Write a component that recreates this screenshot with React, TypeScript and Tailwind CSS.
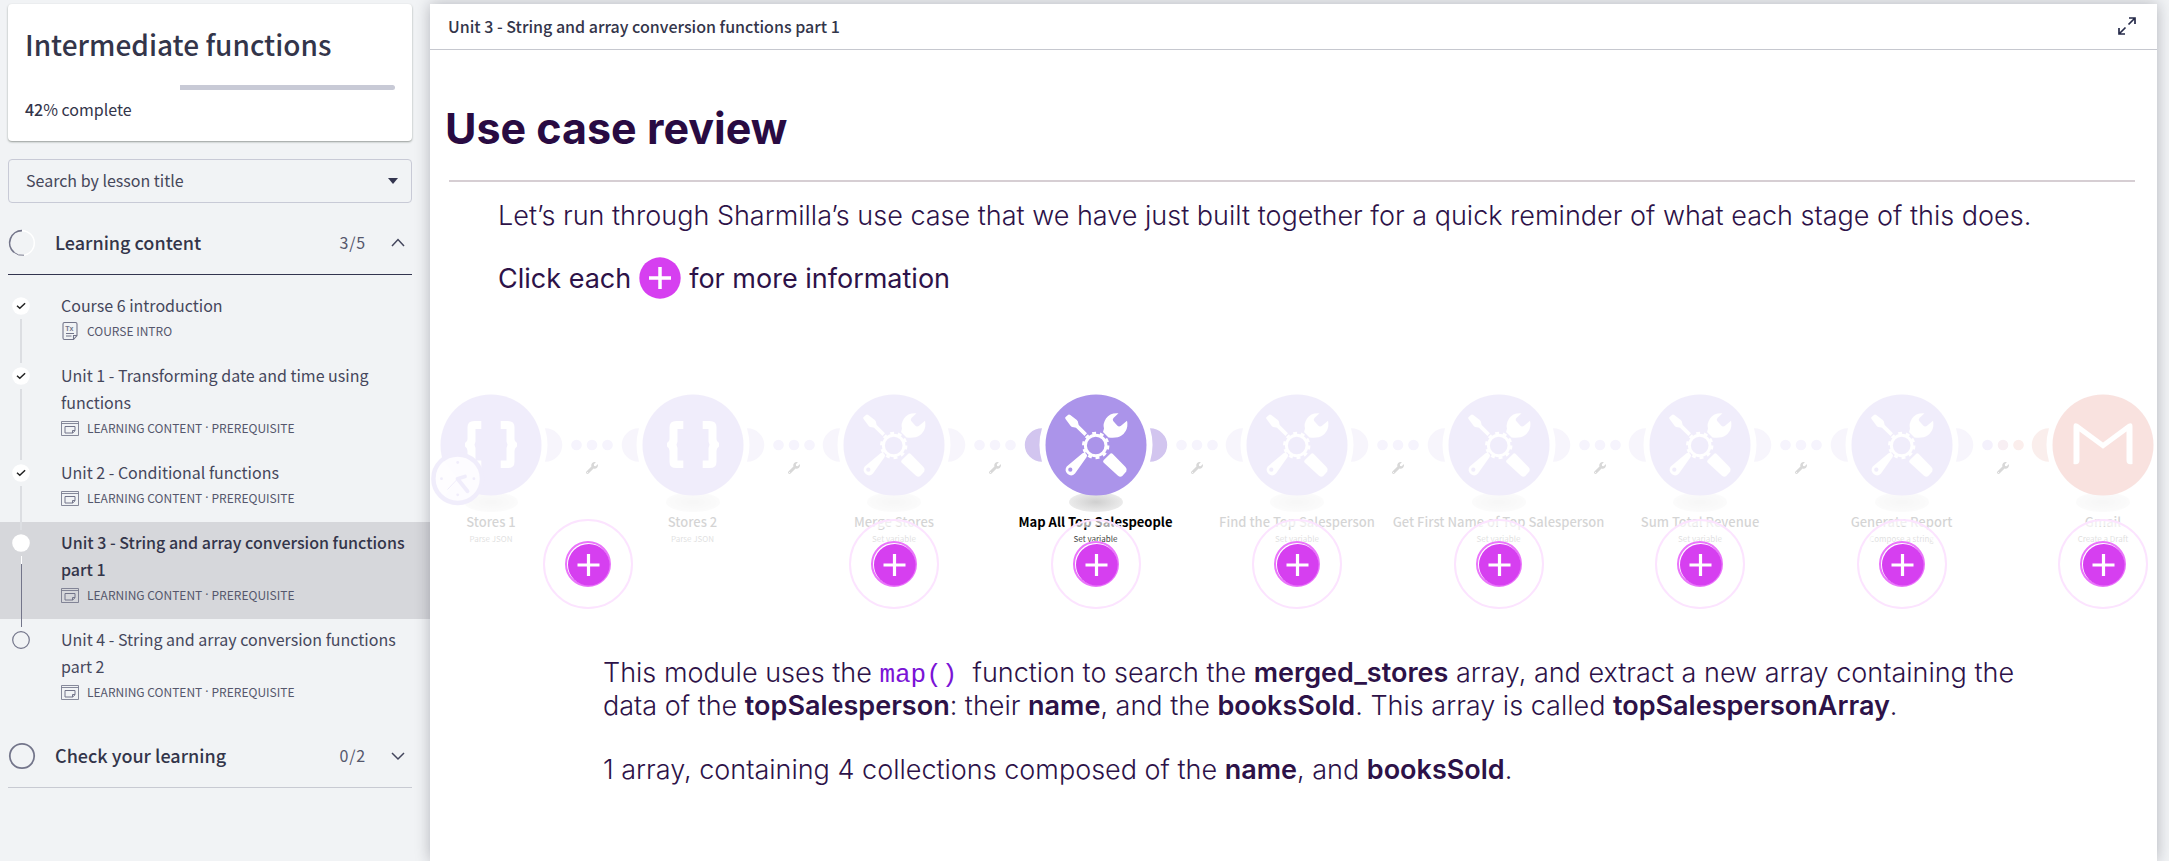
import type { ReactNode } from "react";
import { FaWrench } from "react-icons/fa";

type Status = "done" | "current" | "todo";
type Lesson = { title: string; kind: string[]; status: Status; doc?: boolean };
type IconName = "json" | "tools" | "gmail";
type Step = { label: string; sub: string; icon: IconName; active?: boolean; clock?: boolean; hotspot?: "below" | "between" };

const lessons: Lesson[] = [
  { title: "Course 6 introduction", kind: ["COURSE INTRO"], status: "done", doc: true },
  { title: "Unit 1 - Transforming date and time using functions", kind: ["LEARNING CONTENT", "PREREQUISITE"], status: "done" },
  { title: "Unit 2 - Conditional functions", kind: ["LEARNING CONTENT", "PREREQUISITE"], status: "done" },
  { title: "Unit 3 - String and array conversion functions part 1", kind: ["LEARNING CONTENT", "PREREQUISITE"], status: "current" },
  { title: "Unit 4 - String and array conversion functions part 2", kind: ["LEARNING CONTENT", "PREREQUISITE"], status: "todo" },
];

const steps: Step[] = [
  { label: "Stores 1", sub: "Parse JSON", icon: "json", clock: true, hotspot: "between" },
  { label: "Stores 2", sub: "Parse JSON", icon: "json" },
  { label: "Merge Stores", sub: "Set variable", icon: "tools", hotspot: "below" },
  { label: "Map All Top Salespeople", sub: "Set variable", icon: "tools", active: true, hotspot: "below" },
  { label: "Find the Top Salesperson", sub: "Set variable", icon: "tools", hotspot: "below" },
  { label: "Get First Name of Top Salesperson", sub: "Set variable", icon: "tools", hotspot: "below" },
  { label: "Sum Total Revenue", sub: "Set variable", icon: "tools", hotspot: "below" },
  { label: "Generate Report", sub: "Compose a string", icon: "tools", hotspot: "below" },
  { label: "Gmail", sub: "Create a Draft", icon: "gmail", hotspot: "below" },
];

function DocIcon() {
  return (
    <svg width="18" height="20" viewBox="0 0 18 20" fill="none" stroke="#73758a" strokeWidth="1.1" aria-hidden="true">
      <path d="M3.500 1.500h11q1.500 0 1.500 1.500v11.500l-3.500 4H3.500q-1.500 0-1.500-1.500V3q0-1.500 1.500-1.500z" />
      <path d="M16 14.500h-3.500v4M5 12.500h8M5 15h5.500" />
      <text x="4.200" y="10" fontSize="7" fontWeight="700" fill="#73758a" stroke="none" fontFamily="Liberation Sans, sans-serif">Tx</text>
    </svg>
  );
}

function LessonIcon() {
  return (
    <svg width="18" height="15" viewBox="0 0 18 15" fill="none" stroke="#73758a" aria-hidden="true">
      <path d="M.5.5h17v14H.5zM.5 2.500h17" strokeOpacity=".85" />
      <path d="M4 5.500h10v4.300l-2.300 2.200H4zM14 9.500h-2.500v2.500" />
    </svg>
  );
}

function StatusMark({ status }: { status: Status }) {
  if (status === "todo")
    return (
      <svg className="shrink-0" width="18" height="18" viewBox="0 0 18 18" aria-hidden="true">
        <circle cx="9" cy="9" r="8.300" fill="none" stroke="#73758a" strokeWidth="1.200" />
      </svg>
    );
  return (
    <svg className="shrink-0" width="18" height="18" viewBox="0 0 18 18" aria-hidden="true">
      <circle cx="9" cy="9" r="8.800" fill="#fff" />
      {status === "done" && <path d="M5 8.800l2.800 2.500 5.300-5.100" fill="none" stroke="#222" strokeWidth="1.500" />}
    </svg>
  );
}

function Section({ title, count, open }: { title: string; count: string; open?: boolean }) {
  return (
    <button
      type="button"
      aria-expanded={!!open}
      className={`mt-2.5 mr-[18px] ml-2 flex h-[62px] w-[404px] items-center border-b pb-0.5 text-left ${open ? "border-[#33354f]" : "border-[#c8cad2]"}`}
    >
      <svg width="28" height="28" viewBox="0 0 28 28" fill="none" aria-hidden="true">
        {open ? (
          <>
            <circle cx="14" cy="14" r="12.300" stroke="#fff" strokeWidth="1.500" />
            <path d="M14 1.700A12.300 12.300 0 0 0 6 23.400" stroke="#73758a" strokeWidth="1.800" />
            <path d="M6 23.400A12.300 12.300 0 0 0 16 26.200" stroke="#73758a" strokeWidth="1" />
          </>
        ) : (
          <circle cx="14" cy="14" r="12.200" stroke="#73758a" strokeWidth="1.800" />
        )}
      </svg>
      <span className="ml-[19px] flex-1 pb-px text-lg font-medium">{title}</span>
      <span className="mr-6 pb-px text-base tracking-wider text-[#55576c]">{count}</span>
      <svg className="mr-1.5" width="16" height="16" viewBox="0 0 16 16" fill="none" stroke="#43455c" strokeWidth="1.500" aria-hidden="true">
        <path d={open ? "M2 11l6-6.500 6 6.500" : "M2 5l6 6 6-6"} />
      </svg>
    </button>
  );
}

function Glyph({ icon }: { icon: IconName }) {
  if (icon === "json") {
    const brace = "M40.300 26H33Q26.500 26 26.500 32V44Q26.500 46.500 24 48V51.500Q26.500 53 26.500 56V67Q26.500 73 33 73H40.300V65.500H34.500V53L33.500 49.700 34.500 46.500V34H40.300Z";
    return (
      <g fill="#fff">
        <path d={brace} />
        <path d={brace} transform="matrix(-1 0 0 1 100 0)" />
      </g>
    );
  }
  if (icon === "gmail")
    return (
      <path
        d="M20.500 70V32.500Q20.500 27.500 25 30L50 48.500 75 30Q79.500 27.500 79.500 32.500V70Q73.500 71.500 73.500 66V37.500L50 54.800 26.500 37.500V66Q26.500 71.500 20.500 70Z"
        fill="#fff"
        transform="translate(0 -1)"
      />
    );
  return (
    <g fill="#fff">
      <path d="M19.300 22.300l3-2.600q1-.5 2 .300l6.500 5q1.500 1.300 1.400 3l.5 2 8.300 8.300-2.500 2.700-8.500-8.300-2.300-.4q-2 0-3-1.300l-5-6.700q-.8-1 -.400-2z" />
      <path d="M72.500 18.200Q64 17.500 60 23.500 56.500 29 58 33.500L57 37l5.500 5.500q9 1 13-2 5-3.500 5.800-9.300.4-3-.3-5.500l-6.300 5.300q-2 1-3.500-.5l-4-4.500q-1-1.500.3-3z" />
      <path d="M36.500 58.200q2-1.200 3.700.5 1.700 1.500.3 3.500L29 78.500q-3.500 3.500-7.300.5-3.700-3.500-1-7.500z" />
      <path d="M64.500 58.500q1-.8 2 .2L79.500 72q2 2 .8 4.500l-4 4.500q-2 1.500-4.300-.2L57.500 67.500q-1-1.500.3-2.500z" />
      <circle cx="49.700" cy="50.500" r="10.300" fill="none" stroke="#fff" strokeWidth="3" />
      <circle cx="49.700" cy="50.500" r="12.400" fill="none" stroke="#fff" strokeWidth="2.600" strokeDasharray="3.900 3.890" />
      <circle cx="24.300" cy="74.700" r="2.100" fill="#ab94ea" />
    </g>
  );
}

const EAR = "M54-16.700A17.200 16.700 0 0 1 54 16.700A57 57 0 0 0 54-16.700Z";

function FlowNode({ step, first, last, beforeMail }: { step: Step; first: boolean; last: boolean; beforeMail: boolean }) {
  const mail = step.icon === "gmail";
  const ear = mail ? "#e79b90" : "#d2c5ef";
  const tints = beforeMail ? ["#f4f1fc", "#f8eff3", "#fbeeec"] : ["#f6f4fd", "#f6f4fd", "#f6f4fd"];
  return (
    <div className="relative flex w-[100px] flex-col items-center">
      <div className={`flex flex-col items-center ${step.active ? "" : "opacity-[0.165]"}`}>
        <svg className="overflow-visible" width="100" height="100" viewBox="0 0 100 100" aria-hidden="true">
          <defs>
            <radialGradient id="ground">
              <stop offset="0" stopColor="#cfcfcf" />
              <stop offset="1" stopColor="#ebebeb" />
            </radialGradient>
          </defs>
          <ellipse cx="50" cy="107" rx="27" ry="10" fill="url(#ground)" />
          {!last && <path d={EAR} fill={ear} transform="translate(50 50)" />}
          {!first && <path d={EAR} fill={ear} transform="matrix(-1 0 0 1 50 50)" />}
          <circle cx="50" cy="50" r="50.500" fill={mail ? "#dc5443" : "#ab94ea"} />
          <Glyph icon={step.icon} />
          {step.clock && (
            <g>
              <circle cx="16.700" cy="83.700" r="24.300" fill="#f4f1ff" stroke="#ab94ea" strokeWidth="4.500" />
              <path d="M16.700 83.700L3 66A22 22 0 0 0 4 101Z" fill="#fff" opacity=".6" />
              <g fill="#ab94ea">
                <circle cx="16.700" cy="67.500" r="1.400" />
                <circle cx="16.700" cy="99.800" r="1.400" />
                <circle cx=".5" cy="83.700" r="1.400" />
                <circle cx="32.900" cy="83.700" r="1.400" />
              </g>
              <path d="M24 81.500l-7.500 2.200 10 12.500" fill="none" stroke="#ab94ea" strokeWidth="3.800" strokeLinecap="round" strokeLinejoin="round" />
              <path d="M16 84.500L6.500 94.500" stroke="#ab94ea" strokeWidth="1" />
            </g>
          )}
        </svg>
        <span
          className={`mt-[17px] font-['Noto_Sans_CJK_SC',sans-serif] text-[13px] leading-5 whitespace-nowrap text-black ${step.active ? "font-bold" : "font-medium"}`}
        >
          {step.label}
        </span>
        <span className="mt-0.5 font-['Noto_Sans_CJK_SC',sans-serif] text-[8px] leading-[10px] whitespace-nowrap text-[#444]">{step.sub}</span>
      </div>
      {!last && (
        <div className="absolute top-[44px] left-[129px] flex flex-col items-center">
          <svg width="44" height="12" viewBox="0 0 44 12" aria-hidden="true">
            <circle cx="6.500" cy="6" r="5.300" fill={tints[0]} />
            <circle cx="22" cy="6" r="5.300" fill={tints[1]} />
            <circle cx="37.500" cy="6" r="5.300" fill={tints[2]} />
          </svg>
          <FaWrench className="mt-[11px] size-3 text-[#d8d8d8]" />
        </div>
      )}
      {step.hotspot && (
        <button
          type="button"
          aria-label={`More about ${step.label}`}
          className={`absolute top-[124px] size-[90px] ${step.hotspot === "between" ? "left-[102px]" : "left-[5px]"}`}
        >
          <svg width="90" height="90" viewBox="0 0 90 90" fill="none" aria-hidden="true">
            <circle cx="45" cy="45" r="41" stroke="#fff" strokeOpacity=".65" strokeWidth="6" />
            <circle cx="45" cy="45" r="44" stroke="#fce4ff" strokeWidth="2" />
            <circle cx="45" cy="45" r="23" fill="#fff" />
            <circle cx="45" cy="45" r="22" stroke="#ea75fb" strokeWidth="2" />
            <circle cx="45.800" cy="45.800" r="20.800" fill="#d63ff0" />
            <path d="M45.500 35v22M34.500 46h22" stroke="#fff" strokeWidth="3.200" />
          </svg>
        </button>
      )}
    </div>
  );
}

function B({ children }: { children: ReactNode }) {
  return <strong className="font-semibold">{children}</strong>;
}

export default function App() {
  return (
    <div className="flex min-h-screen overflow-hidden bg-[#f1f3f5] font-['Noto_Sans_CJK_SC',sans-serif] text-[#33354a]">
      <aside className="w-[430px] shrink-0 pt-1">
        <div className="mr-[18px] ml-2 h-[137px] rounded bg-white px-[17px] pt-[18px] shadow-[0_1px_2px_rgba(60,70,60,0.5)]">
          <h1 className="text-[28px] leading-[44px] font-medium">Intermediate functions</h1>
          <div role="progressbar" aria-label="Course progress" aria-valuenow={42} className="mt-[19px] flex h-[5px]">
            <div className="w-[42%] bg-white" />
            <div className="flex-1 rounded-r-sm bg-[#c8cad6]" />
          </div>
          <p className="mt-[7px] text-base leading-6">
            <span className="font-medium">42</span>% complete
          </p>
        </div>
        <div className="relative mt-[18px] mr-[18px] ml-2">
          <select
            aria-label="Search by lesson title"
            className="block h-11 w-full appearance-none rounded border border-[#c8cad6] bg-transparent px-[17px] pb-0.5 text-base text-[#45475a]"
          >
            <option>Search by lesson title</option>
          </select>
          <svg className="pointer-events-none absolute top-[19px] right-3.5" width="10" height="6" viewBox="0 0 10 6" aria-hidden="true">
            <path d="M0 0h10L5 6z" fill="#33354f" />
          </svg>
        </div>

        <Section title="Learning content" count="3/5" open />
        <ol className="mt-2.5">
          {lessons.map((l, i) => {
            const current = l.status === "current";
            return (
              <li key={l.title} className={`flex pt-[7px] pr-2 pb-3 pl-3 ${current ? "bg-[#d6d7db]" : ""}`}>
                <div className="relative flex w-[18px] shrink-0 justify-center pt-[5px]">
                  <StatusMark status={l.status} />
                  {i < lessons.length - 1 && (
                    <span
                      className={`absolute top-[27px] -bottom-5 ${current ? "w-px border-t-8 border-white bg-[#73758a]" : "w-0.5 bg-[#dcdee2]"}`}
                    />
                  )}
                </div>
                <a href="#lesson" aria-current={current ? "page" : undefined} className="ml-[31px] block">
                  <span className={`block text-base leading-[27px] ${current ? "font-medium" : "text-[#45475c]"}`}>{l.title}</span>
                  <span className="flex h-6 items-center text-xs text-[#55576c]">
                    {l.doc ? <DocIcon /> : <LessonIcon />}
                    <span className="ml-2">{l.kind[0]}</span>
                    {l.kind[1] && (
                      <>
                        <span className="mx-[3px] font-['Noto_Sans',sans-serif]">·</span>
                        <span>{l.kind[1]}</span>
                      </>
                    )}
                  </span>
                </a>
              </li>
            );
          })}
        </ol>
        <Section title="Check your learning" count="0/2" />
      </aside>

      <main className="relative mt-1 mr-3 min-w-0 flex-1 bg-white shadow-[0_0_14px_rgba(20,20,40,0.28)]">
        <header className="flex h-[46px] items-center justify-between border-b border-[#c6c8cf] pr-[21px] pb-0.5 pl-[18px]">
          <h2 className="text-base font-medium">Unit 3 - String and array conversion functions part 1</h2>
          <button type="button" aria-label="Full screen">
            <svg width="18" height="18" viewBox="0 0 18 18" fill="none" stroke="#262b4a" strokeWidth="1.700" aria-hidden="true">
              <path d="M11 1H17v6M17 1l-6.500 6.500M1 11V17h6M1 17l6.500-6.500" />
            </svg>
          </button>
        </header>

        <div className="font-['Inter',sans-serif] text-[27px] leading-[33px] text-[#2d1248]">
          <h3 className="mt-[50px] ml-[15px] text-[43px] leading-[56px] font-bold text-[#290b42]">Use case review</h3>
          <hr className="mt-6 mr-[22px] ml-[19px] border-t-2 border-[#d6ced3]" />
          <p className="mt-[17px] pl-[68px] font-light">
            Let’s run through Sharmilla’s use case that we have just built together for a quick reminder of what each stage of this does.
          </p>
          <p className="mt-[25px] flex items-center gap-2 pl-[68px]">
            Click each
            <svg width="42" height="42" viewBox="0 0 42 42" aria-label="plus" role="img">
              <circle cx="21" cy="21" r="20.700" fill="#d63ff0" />
              <path d="M21 10v22M10 21h22" stroke="#fff" strokeWidth="3.500" />
            </svg>
            for more information
          </p>

          <div className="mt-24 flex justify-between pr-1 pl-[11px]">
            {steps.map((s, i) => (
              <FlowNode key={s.label} step={s} first={i === 0} last={i === steps.length - 1} beforeMail={i === steps.length - 2} />
            ))}
          </div>

          <div className="mt-28 pb-16 pl-[173px] font-light">
            <p>
              This module uses the <code className="font-['Liberation_Mono',monospace] text-[26px] leading-none text-[#7a14d6]">map()</code>&nbsp; function to
              search the <B>merged_stores</B> array, and extract a new array containing the
              <br />
              data of the <B>topSalesperson</B>: their <B>name</B>, and the <B>booksSold</B>. This array is called <B>topSalespersonArray</B>.
            </p>
            <p className="mt-[31px]">
              1 array, containing 4 collections composed of the <B>name</B>, and <B>booksSold</B>.
            </p>
          </div>
        </div>
      </main>
    </div>
  );
}
